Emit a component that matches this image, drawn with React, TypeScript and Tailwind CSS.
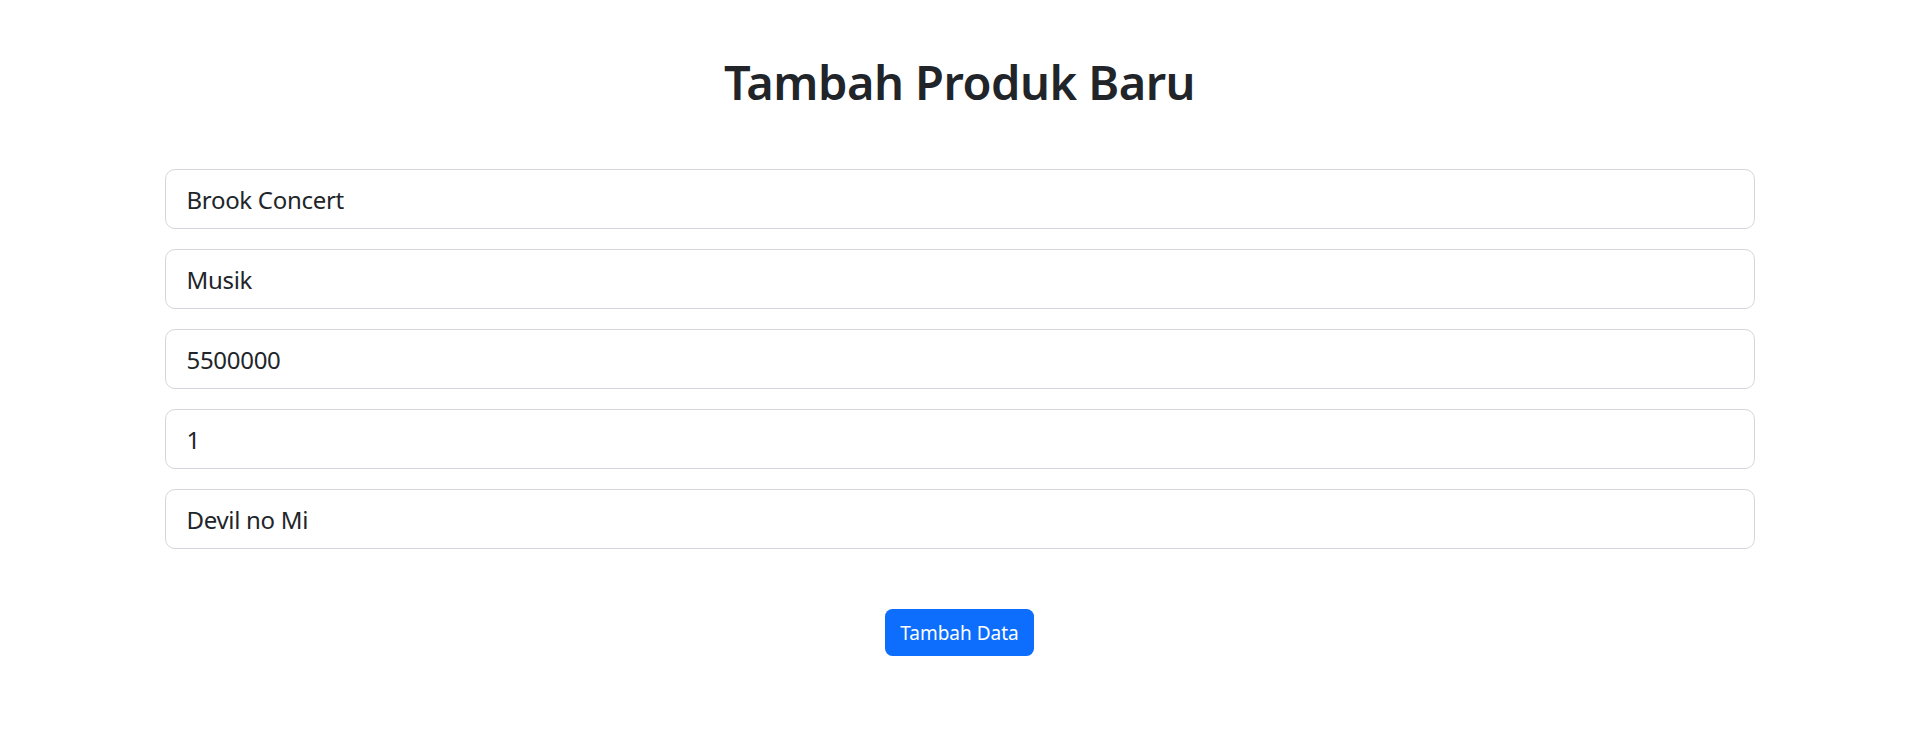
export default function App() {
  const fields = ['Brook Concert', 'Musik', '5500000', '1', 'Devil no Mi'];

  return (
    <div className="min-h-[745px] bg-white text-[#212529] font-['Noto_Sans',_'Open_Sans',_sans-serif]">
      <div className="mx-auto w-[1590px] pt-[52px]">
        <h1 className="mb-[57px] text-center text-[47px] font-semibold leading-[60px] tracking-[-0.5px]">
          Tambah Produk Baru
        </h1>
        <form className="flex flex-col">
          {fields.map((v, i) => (
            <input
              key={i}
              type="text"
              defaultValue={v}
              className="mb-5 h-[60px] w-full rounded-[10px] border border-[#d3d7db] bg-white pl-[21px] pr-5 text-[24px] tracking-[-0.3px] text-[#212529] outline-none"
            />
          ))}
          <div className="mt-10 flex justify-center">
            <button
              type="button"
              className="h-[47px] rounded-[7.5px] bg-[#0d6efd] px-[15px] text-[19px] leading-[30px] text-white"
            >
              Tambah Data
            </button>
          </div>
        </form>
      </div>
    </div>
  );
}
